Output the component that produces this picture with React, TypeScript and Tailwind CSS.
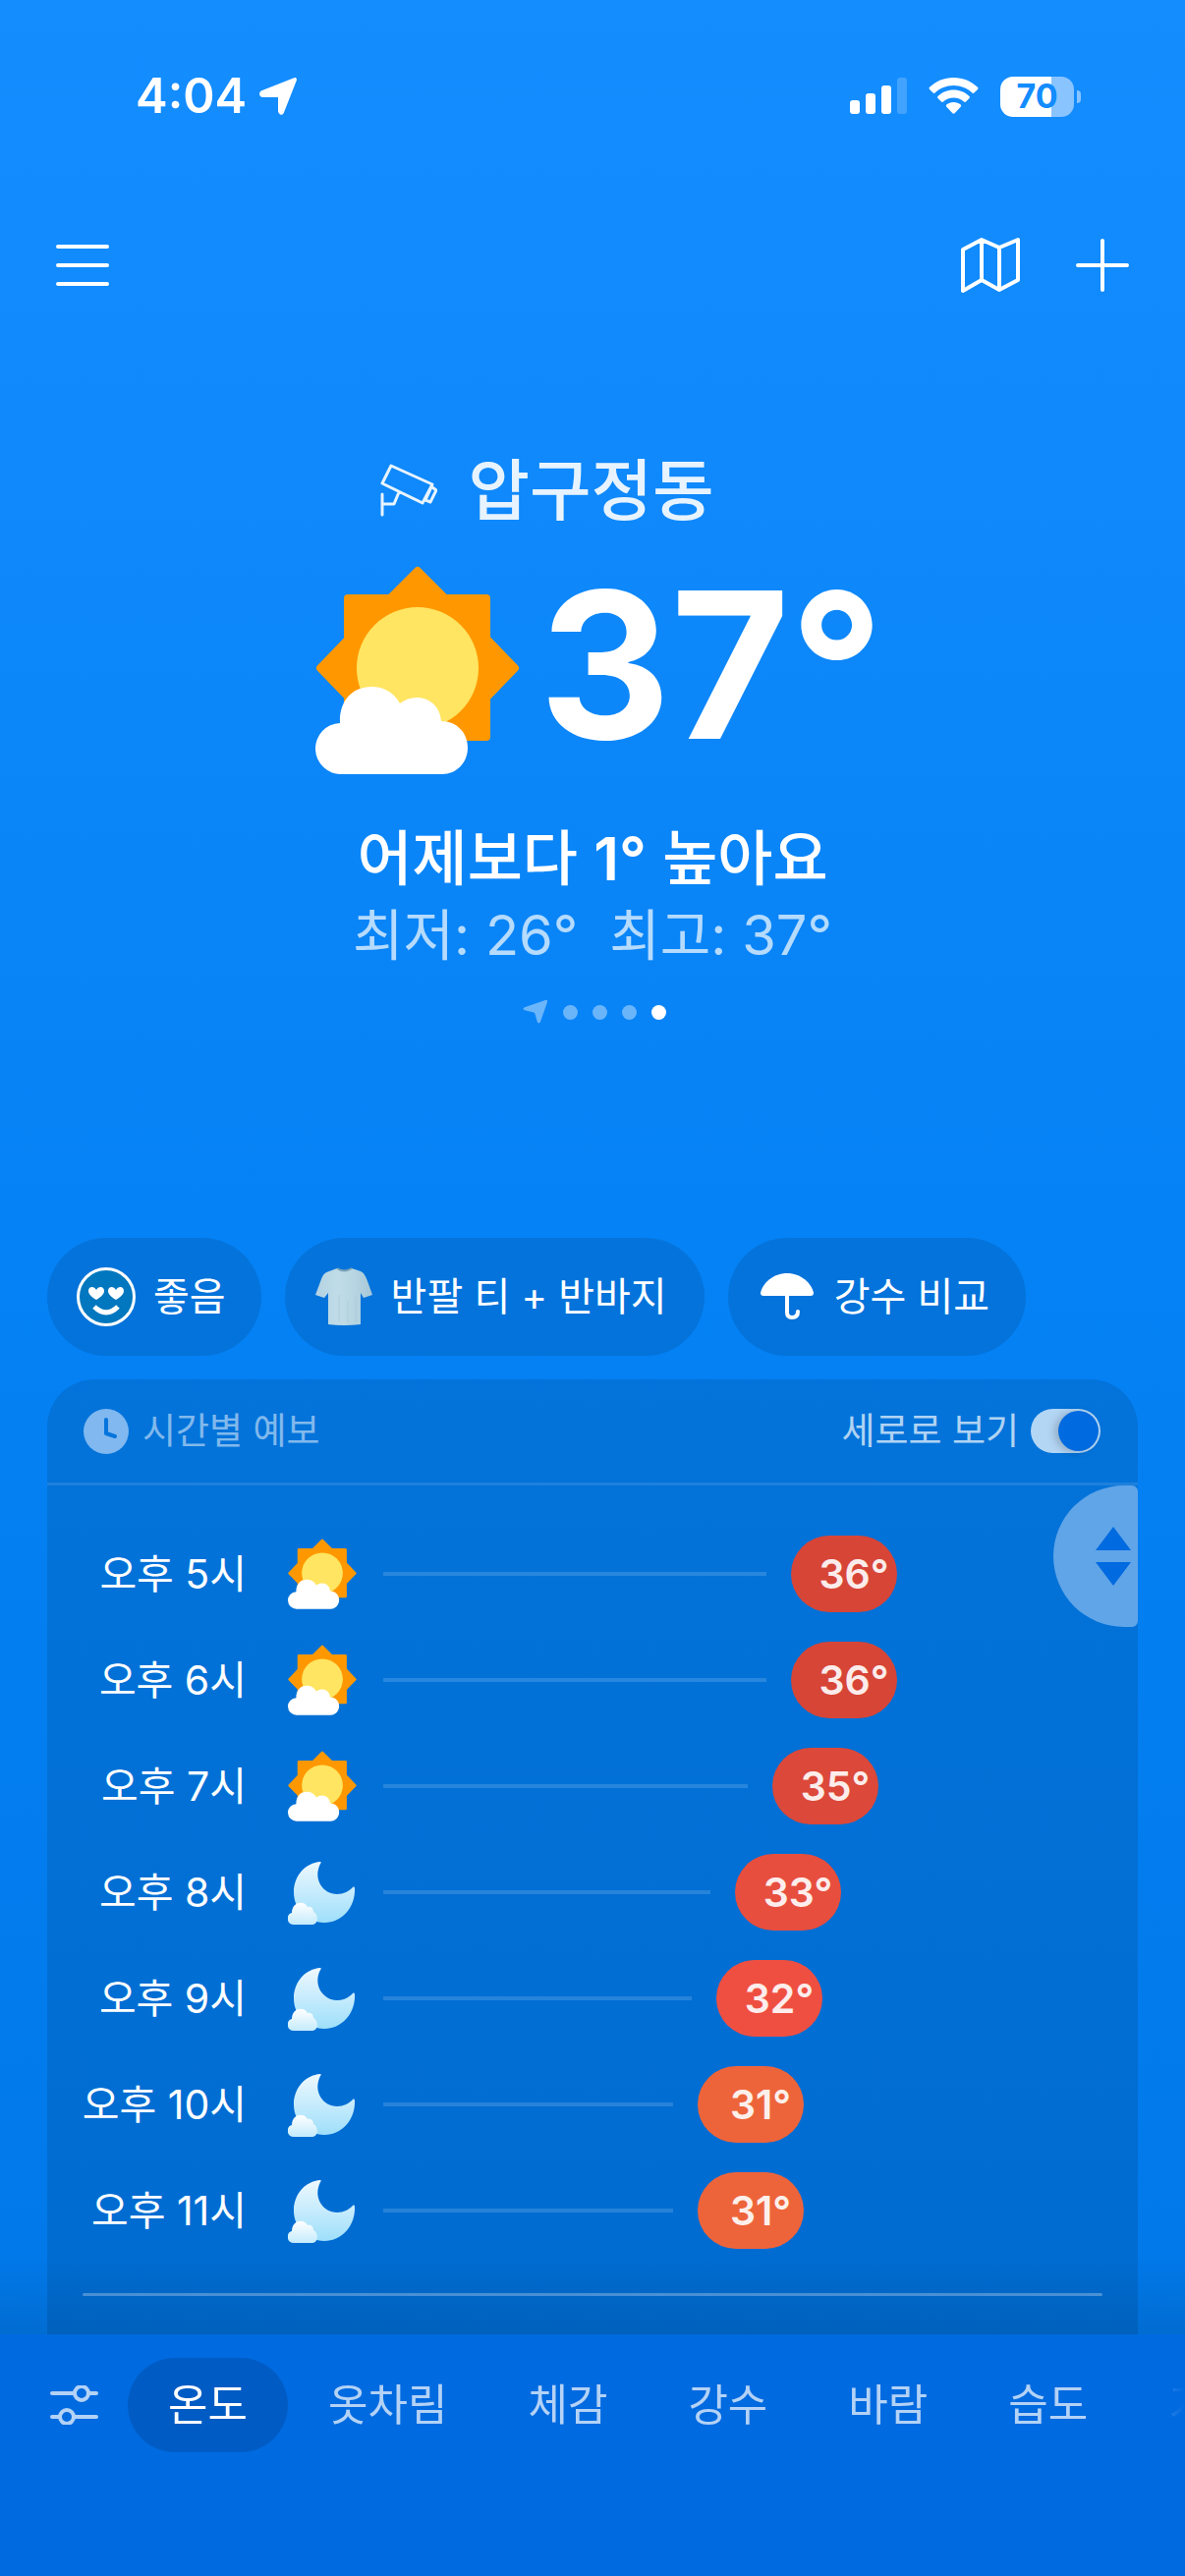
import React from "react";

const hours = [
  { time: "오후 5시", temp: 36, night: false, color: "bg-[#d74537]" },
  { time: "오후 6시", temp: 36, night: false, color: "bg-[#d74537]" },
  { time: "오후 7시", temp: 35, night: false, color: "bg-[#dc4839]" },
  { time: "오후 8시", temp: 33, night: true, color: "bg-[#e74e3e]" },
  { time: "오후 9시", temp: 32, night: true, color: "bg-[#ef4f41]" },
  { time: "오후 10시", temp: 31, night: true, color: "bg-[#ee643a]" },
  { time: "오후 11시", temp: 31, night: true, color: "bg-[#ee643a]" },
];

const tabs = ["온도", "옷차림", "체감", "강수", "바람", "습도", "기압"];

const SunCloud = ({ className }: { className: string }) => (
  <svg viewBox="0 0 208 212" className={className} aria-hidden="true">
    <g fill="#ff9800" stroke="#ff9800" strokeWidth="8" strokeLinejoin="round">
      <path d="M33 33H174V174H33Z" />
      <path d="M104 5L133 34H75ZM203 104L174 134V74ZM5 104L34 74V134Z" />
    </g>
    <circle cx="104" cy="104" r="62" fill="#ffe561" />
    <path
      d="M27 212a26 26 0 0 1-2-52c-1-22 12-37 32-37 13 0 23 6 29 17 5-4 11-6 17-6 14 0 24 10 25 24 16 0 27 12 27 27 0 15-11 27-26 27Z"
      fill="#fff"
    />
  </svg>
);

const MoonCloud = ({ className }: { className: string }) => (
  <svg viewBox="0 0 70 72" className={className} aria-hidden="true">
    <defs>
      <linearGradient id="moon" x1="0" y1="0" x2="0" y2="1">
        <stop offset="0" stopColor="#eef8ff" />
        <stop offset="1" stopColor="#9edffa" />
      </linearGradient>
      <linearGradient id="puff" x1="0" y1="0" x2="0" y2="1">
        <stop offset="0" stopColor="#ffffff" />
        <stop offset="1" stopColor="#c4ebfc" />
      </linearGradient>
    </defs>
    <path
      d="M33 5c1 0 1 1 0 2C25 23 36 38 50 38c7 0 12-3 16-7 1-1 2 0 2 1 1 19-13 35-31 35S6 53 6 36C6 19 18 6 33 5Z"
      fill="url(#moon)"
    />
    <path
      d="M6 69c-8 0-8-11-2-12 0-12 13-13 16-6 4-1 6 2 6 5 5 2 6 13-2 13Z"
      fill="url(#puff)"
    />
  </svg>
);

const StatusBar = () => (
  <div className="flex h-[196px] items-center justify-between pr-[106px] pl-[138px]">
    <div className="flex items-center gap-3">
      <span className="text-[49px] leading-[60px] font-semibold">4:04</span>
      <svg viewBox="0 0 40 40" className="size-10" fill="#fff" stroke="#fff" strokeWidth="4" strokeLinejoin="round">
        <path d="M37 3L24 36Q23 38 22 35V19H4Q2 18 4 16Z" />
      </svg>
    </div>
    <div className="flex items-center gap-[22px]">
      <svg viewBox="0 0 58 38" className="h-[38px] w-[58px]" fill="#fff">
        <rect x="0" y="23" width="10" height="14" rx="3" />
        <rect x="16" y="16" width="10" height="21" rx="3" />
        <rect x="32" y="8" width="10" height="29" rx="3" />
        <rect x="48" y="0" width="10" height="37" rx="3" opacity=".2" />
      </svg>
      <svg viewBox="0 0 51 38" className="h-[38px] w-[51px]" fill="#fff">
        <path d="M25.500 0C35 0 43.600 3.700 50 9.800c.6.600.6 1.500 0 2.100l-3.600 3.600c-.6.600-1.400.6-2 0C39.400 10.800 32.800 8 25.500 8S11.600 10.800 6.600 15.500c-.6.600-1.400.6-2 0L1 11.900c-.6-.6-.6-1.500 0-2.100C7.400 3.700 16 0 25.500 0Z" />
        <path d="M25.500 12.600c6.200 0 11.800 2.400 16 6.300.6.600.6 1.500 0 2.100L38 24.500c-.6.600-1.400.6-2 0a15.600 15.600 0 0 0-21 0c-.6.600-1.400.6-2 0L9.500 21c-.6-.6-.6-1.500 0-2.100 4.200-3.900 9.800-6.300 16-6.300Z" />
        <path d="M25.500 25c2.800 0 5.300 1 7.200 2.600.6.500.6 1.500 0 2.100l-6.100 6.500c-.6.600-1.600.6-2.200 0l-6.100-6.500c-.6-.6-.6-1.600 0-2.100 1.900-1.600 4.400-2.600 7.200-2.600Z" />
      </svg>
      <div className="flex items-center gap-[3px]">
        <div className="flex h-[41px] w-[75px] items-center justify-center rounded-[13px] bg-linear-to-r from-white from-70% to-[#8ac4ff] to-70% text-[34px] leading-none font-bold text-[#138cff]">
          70
        </div>
        <div className="h-[13px] w-1 rounded-r-full bg-[#8ac4ff]" />
      </div>
    </div>
  </div>
);

const Toolbar = () => (
  <div className="flex h-[148px] items-center justify-between px-[57px]">
    <button aria-label="메뉴">
      <svg viewBox="0 0 54 54" className="size-[54px]" stroke="#fff" strokeWidth="4" strokeLinecap="round">
        <path d="M2 8H52M2 27H52M2 46H52" />
      </svg>
    </button>
    <div className="flex items-center gap-14">
      <button aria-label="지도">
        <svg viewBox="0 0 61 58" className="h-[58px] w-[61px]" fill="none" stroke="#fff" strokeWidth="4" strokeLinejoin="round">
          <path d="M2 13L21 3L39 11L58 3V44L39 54L21 44L2 55ZM21 3V44M39 11V54" />
        </svg>
      </button>
      <button aria-label="추가">
        <svg viewBox="0 0 54 54" className="size-[54px]" stroke="#fff" strokeWidth="4" strokeLinecap="round">
          <path d="M2 27H52M27 2V52" />
        </svg>
      </button>
    </div>
  </div>
);

const Current = () => (
  <section className="flex flex-col items-center pt-[106px]">
    <div className="flex items-center gap-[31px] pr-[92px] opacity-90">
      <svg viewBox="0 0 58 54" className="h-[54px] w-[58px]" fill="none" stroke="#fff" strokeWidth="3" strokeLinejoin="round" strokeLinecap="round">
        <path d="M11 2L53 21L43 40L2 20ZM53 24L57 27L51 39L46 37M51 26L46 37M19 29L14 41H2M2 31V52" />
      </svg>
      <h1 className="text-[68px] leading-[98px] font-medium">압구정동</h1>
    </div>
    <div className="flex items-start gap-5 pt-7 pl-[14px]">
      <SunCloud className="h-[212px] w-[208px]" />
      <p className="text-[208px] leading-[201px] font-bold">37°</p>
    </div>
    <p className="pt-[46px] text-[61px] leading-[80px] font-medium">
      어제보다 <span className="font-semibold">1°</span> 높아요
    </p>
    <p className="flex gap-8 text-[56px] leading-[76px] text-white/70">
      <span>최저: 26°</span>
      <span>최고: 37°</span>
    </p>
    <div className="flex items-center gap-[15px] pt-[27px] pl-1">
      <svg viewBox="0 0 26 26" className="size-[26px]" fill="#fff" opacity=".4">
        <path d="M23 1c1.500-.5 2.500.5 2 2l-7 20c-.6 1.800-2.800 1.800-3.200 0L12.500 15c-.2-.8-.6-1.200-1.500-1.500L2 11.200C0 10.700 0 9 2 8.300Z" />
      </svg>
      <span className="size-[15px] rounded-full bg-white/40" />
      <span className="size-[15px] rounded-full bg-white/40" />
      <span className="size-[15px] rounded-full bg-white/40" />
      <span className="size-[15px] rounded-full bg-white" />
    </div>
  </section>
);

const Chips = () => (
  <div className="flex gap-6 px-12 text-[40px] leading-[60px]">
    <button className="flex h-[120px] items-center gap-[18px] rounded-full bg-black/10 pr-9 pl-[30px]">
      <svg viewBox="0 0 60 60" className="size-[60px]">
        <circle cx="30" cy="30" r="28.500" fill="#0077be" stroke="#fff" strokeWidth="3" />
        <path
          d="M20 33c-5-3-8-6-8-9 0-5 6-5 8-1 2-4 8-4 8 1 0 3-3 6-8 9ZM40 33c-5-3-8-6-8-9 0-5 6-5 8-1 2-4 8-4 8 1 0 3-3 6-8 9Z"
          fill="#fff"
        />
        <path d="M18 40Q30 52 42 40" fill="none" stroke="#fff" strokeWidth="5" />
      </svg>
      좋음
    </button>
    <button className="flex h-[120px] items-center gap-[18px] rounded-full bg-black/10 pr-[38px] pl-[30px]">
      <svg viewBox="0 0 58 60" className="size-[60px]">
        <defs>
          <linearGradient id="shirt" x1="0" y1="0" x2="1" y2="0">
            <stop offset="0" stopColor="#b4d2e2" />
            <stop offset=".4" stopColor="#c0dce8" />
            <stop offset=".7" stopColor="#b6d4e1" />
            <stop offset="1" stopColor="#a6c7d8" />
          </linearGradient>
        </defs>
        <path
          d="M22 1Q29 5 37 1L46 4C50 6 51 9 53 14L58 28L49 31L46 26V58Q29 60 13 58V26L9 31L0 28L6 12C8 7 10 5 14 4Z"
          fill="url(#shirt)"
        />
        <path d="M22 1Q29 6 37 1" fill="none" stroke="#7fa3b5" strokeWidth="2" />
        <path d="M24 28V56M33 34V56M41 30V56" stroke="#a5c4d3" strokeWidth="1" opacity=".6" />
      </svg>
      반팔 티 + 반바지
    </button>
    <button className="flex h-[120px] items-center gap-[18px] rounded-full bg-black/10 pr-[37px] pl-[30px]">
      <svg viewBox="0 0 60 60" className="size-[60px]">
        <path d="M30 6C44 6 55 16 57 26Q57 29 54 29H6Q3 29 3 26C5 16 16 6 30 6Z" fill="#fff" />
        <path d="M30 28V46Q30 51 35 51Q41 51 41 45" fill="none" stroke="#fff" strokeWidth="4" strokeLinecap="round" />
      </svg>
      강수 비교
    </button>
  </div>
);

const Forecast = () => (
  <section className="relative mx-12 mt-6 flex-1 rounded-t-[48px] bg-black/10">
    <header className="flex h-[108px] items-center justify-between border-b-[3px] border-white/10 pr-[38px] pl-[37px] text-[37px] leading-[57px]">
      <h2 className="flex items-center gap-[14px] text-white/50">
        <svg viewBox="0 0 46 46" className="size-[46px]">
          <circle cx="23" cy="23" r="23" fill="#80b8ef" />
          <path d="M23 11V25L32 28" fill="none" stroke="#0574dc" strokeWidth="4" strokeLinecap="round" strokeLinejoin="round" />
        </svg>
        시간별 예보
      </h2>
      <label className="flex items-center gap-3 text-white/70">
        세로로 보기
        <span className="relative flex h-[45px] w-[71px]">
          <input
            type="checkbox"
            defaultChecked
            className="peer h-[45px] w-[71px] appearance-none rounded-full bg-[#b4d6f5]"
          />
          <span className="pointer-events-none absolute top-[2px] left-[2px] size-[41px] rounded-full bg-[#006ae0] shadow-[-4px_1px_8px_rgba(0,0,0,0.2)] peer-checked:right-[2px] peer-checked:left-auto" />
        </span>
      </label>
    </header>
    <button
      aria-label="스크롤"
      className="absolute top-[108px] right-0 flex h-36 w-[86px] items-center justify-end rounded-l-[72px] rounded-r-md bg-[#60a5e8] pr-[7px]"
    >
      <svg viewBox="0 0 36 60" className="h-[60px] w-9" fill="#006ae0">
        <path d="M18 0L36 24H0ZM18 60L0 36H36Z" />
      </svg>
    </button>
    <ul className="pt-9 pr-[245px]">
      {hours.map((hour) => (
        <li key={hour.time} className="flex h-[108px] items-center">
          <span className="w-[203px] shrink-0 text-right text-[41px] leading-[60px]">{hour.time}</span>
          {hour.night ? (
            <MoonCloud className="ml-[42px] h-[72px] w-[70px] shrink-0" />
          ) : (
            <SunCloud className="ml-[42px] h-[72px] w-[70px] shrink-0" />
          )}
          <span className="mr-[25px] ml-[27px] h-1 flex-1 bg-white/15" />
          <span
            className={`flex h-[78px] w-[108px] shrink-0 items-center justify-center rounded-full pl-5 text-[41px] leading-none font-semibold text-white/90 ${hour.color}`}
            style={{ marginRight: (36 - hour.temp) * 19 }}
          >
            {hour.temp}°
          </span>
        </li>
      ))}
    </ul>
    <div className="mx-9 mt-[30px] h-[3px] rounded-full bg-white/30" />
    <div className="h-[39px]" />
  </section>
);

const TabBar = () => (
  <nav className="flex h-[246px] items-start bg-[#006ae0] pt-6 pl-[51px]">
    <button aria-label="설정" className="mr-[30px] flex h-24 shrink-0 items-center">
      <svg viewBox="0 0 49 40" className="h-10 w-[49px]" fill="none" stroke="#b3d2f6" strokeWidth="4" strokeLinecap="round">
        <path d="M2 8H24M40 8H47M2 32H9M25 32H47" />
        <circle cx="32" cy="8" r="7" />
        <circle cx="17" cy="32" r="7" />
      </svg>
    </button>
    <div className="flex flex-1 overflow-x-auto mask-r-from-[92%] [scrollbar-width:none]">
      {tabs.map((tab, index) => (
        <button
          key={tab}
          className={`h-24 shrink-0 rounded-full px-[41px] text-[44px] leading-[60px] ${
            index === 0 ? "bg-[#005cc4] text-white" : "text-white/70"
          }`}
        >
          {tab}
        </button>
      ))}
    </div>
  </nav>
);

const App = () => {
  return (
    <div
      lang="ko"
      className="flex min-h-screen flex-col bg-linear-to-b from-[#148dff] via-[#0582f5] via-48% to-[#0076e6] font-['Inter','Noto_Sans_CJK_KR',sans-serif] text-white"
    >
      <StatusBar />
      <Toolbar />
      <main className="relative flex flex-1 flex-col">
        <Current />
        <div className="h-[217px]" />
        <Chips />
        <Forecast />
        <div className="pointer-events-none absolute bottom-0 h-20 w-full bg-linear-to-b from-transparent to-black/10" />
      </main>
      <TabBar />
    </div>
  );
};

export default App;
